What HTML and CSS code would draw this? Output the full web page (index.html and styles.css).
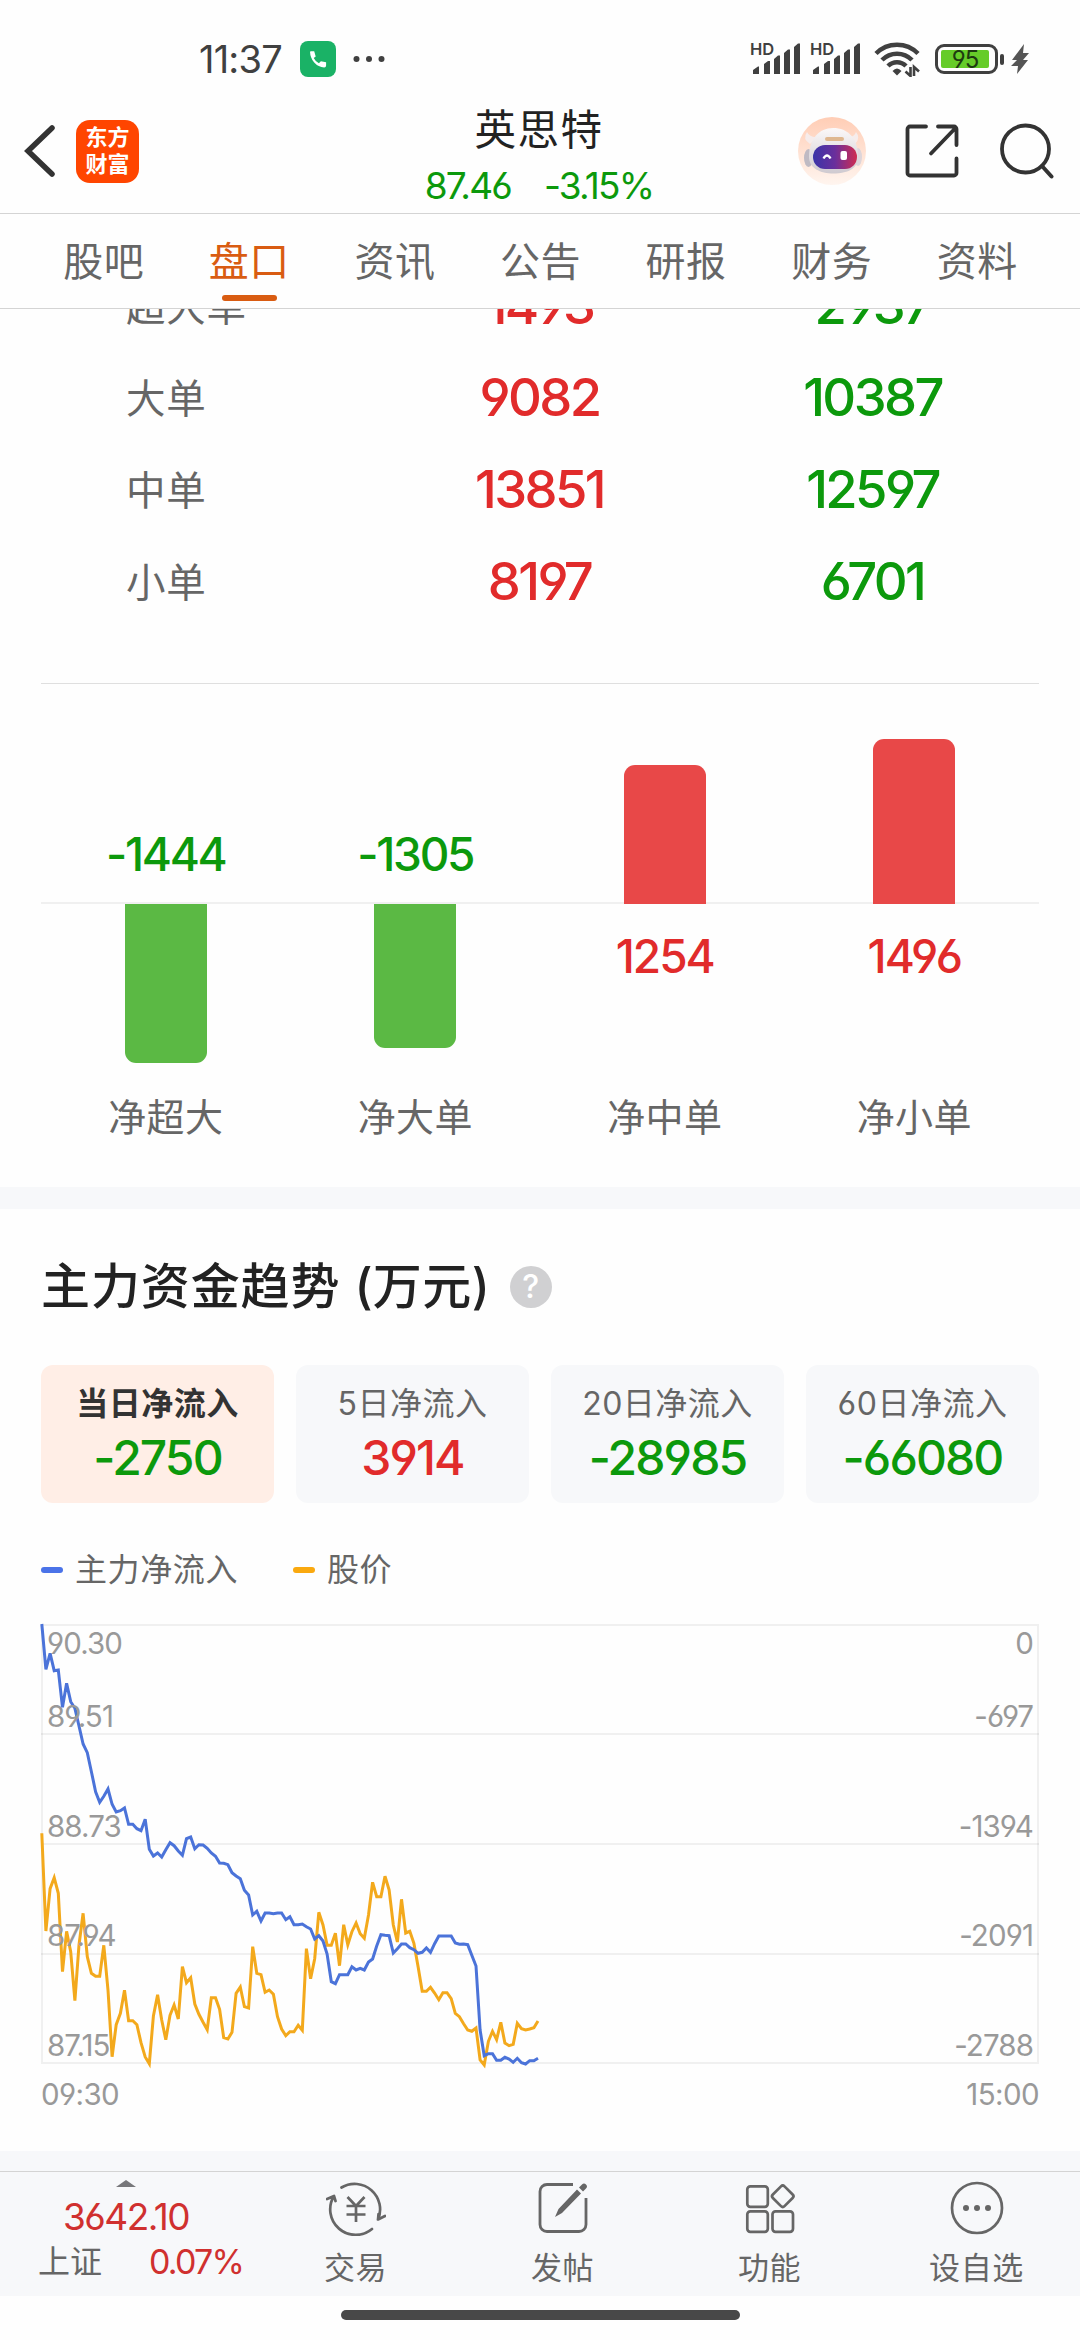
FILE: index.html
```html
<!DOCTYPE html>
<html lang="zh-CN">
<head>
<meta charset="utf-8">
<title>英思特 盘口</title>
<link rel="stylesheet" href="styles.css">
</head>
<body>
<div class="status">
  <span class="clock">11:37</span>
  <svg class="phone" viewBox="0 0 36 36"><rect width="36" height="36" rx="8" fill="#1ab266"/><path d="M10 11.2q0-1 1-1h3.2l1.500 5.200-2 1.600q2 4 5.200 5.200l2-1.900 5.200 1v3.200q0 2-1.900 2-5.800-.3-10-5-4-4.500-4.200-11.300z" fill="#fff"/></svg>
  <svg class="more" viewBox="0 0 32 8"><circle cx="3.500" cy="4" r="3"/><circle cx="16" cy="4" r="3"/><circle cx="28.500" cy="4" r="3"/></svg>
  <div class="status-right">
    <div class="signal"><span>HD</span><svg viewBox="0 0 50 32"><path d="M2 31v-4l5-3.500h1v7.500zM13 31v-10l4-3h2v13zM23 31v-15l4-3.500h2v18.500zM33 31v-21l4-3.500h2v24.500zM43 31v-27l4-3.500h2v30.500z"/></svg></div>
    <div class="signal"><span>HD</span><svg viewBox="0 0 50 32"><path d="M2 31v-4l5-3.500h1v7.500zM13 31v-10l4-3h2v13zM23 31v-15l4-3.500h2v18.500zM33 31v-21l4-3.500h2v24.500zM43 31v-27l4-3.500h2v30.500z"/></svg></div>
    <svg class="wifi" viewBox="0 0 46 36"><g fill="none" stroke="#404040" stroke-width="4.500"><path d="M2 12.500a29.500 29.500 0 0 1 42 0"/><path d="M8 19a21 21 0 0 1 30 0"/><path d="M14 25a12.500 12.500 0 0 1 18 0"/></g><path d="M18.500 30q4.500-5 9 0L23 34.500z" fill="#404040"/><path d="M36.500 26v9l-5-4.500M40 35v-9l5 4.500" fill="none" stroke="#404040" stroke-width="2.600"/></svg>
    <div class="battery"><b>95</b></div><i class="battery-tip"></i>
    <svg class="bolt" viewBox="0 0 18 30"><path d="M13 0L1 16h5L0 22h7L6 30 17 16h-5l6-7h-6z" fill="#555"/></svg>
  </div>
</div>

<header class="header">
  <div class="head-left">
    <svg class="back" viewBox="0 0 32 54"><path d="M28 4L4 27l24 23" fill="none" stroke="#333" stroke-width="5.500" stroke-linecap="round"/></svg>
    <div class="logo"><span>东方</span><span>财富</span></div>
  </div>
  <div class="head-title">
    <h1>英思特</h1>
    <p><span class="px">87.46</span><span class="pct">-3.15%</span></p>
  </div>
  <div class="head-right">
    <svg class="robot" viewBox="0 0 68 68">
      <defs><linearGradient id="bg" x2="0" y2="1"><stop offset="0" stop-color="#ffcdb5"/><stop offset="1" stop-color="#fff5ef"/></linearGradient><linearGradient id="visor"><stop offset="0" stop-color="#3a34a8"/><stop offset=".5" stop-color="#6a2f9c"/><stop offset="1" stop-color="#d02c50"/></linearGradient><linearGradient id="shell" x2="0" y2="1"><stop offset="0" stop-color="#fbf8f8"/><stop offset="1" stop-color="#cfcad0"/></linearGradient></defs>
      <circle cx="34" cy="34" r="34" fill="url(#bg)"/>
      <path d="M9 15q-5 7 3 12l8-7q-8 1-11-5zM58 15q5 6-1 12l-8-7q7 1 9-5z" fill="#f6eceb"/>
      <ellipse cx="10.500" cy="41" rx="4.500" ry="9" fill="#bfbac3"/><ellipse cx="60" cy="40" rx="4" ry="9" fill="#ddd5da"/>
      <path d="M35 11c15 0 25 10 25 29 0 12-11 16.500-24.500 16.500S11 51 11 40c0-18 10-29 24-29z" fill="url(#shell)"/>
      <rect x="15" y="28" width="44" height="24" rx="12" fill="url(#visor)"/>
      <rect x="27" y="20" width="19" height="4" rx="2" fill="#dfb78f"/>
      <path d="M25.500 41.500q3.500-6 7 0" fill="none" stroke="#fff" stroke-width="2.400"/><rect x="42.500" y="34" width="6.500" height="9" rx="2" fill="#fff"/>
    </svg>
    <svg class="share" viewBox="0 0 54 54"><path d="M21 2.500H5a2.500 2.500 0 0 0-2.500 2.500v44A2.500 2.500 0 0 0 5 51.500h44a2.500 2.500 0 0 0 2.500-2.500V34.500M33 2.500h16A2.500 2.500 0 0 1 51.500 5v16M26 29.500L50.500 4" fill="none" stroke="#333" stroke-width="3.800" stroke-linecap="round"/></svg>
    <svg class="search" viewBox="0 0 54 56"><circle cx="25.500" cy="26" r="23.500" fill="none" stroke="#333" stroke-width="3.800"/><path d="M42 43l9.500 10.500" stroke="#333" stroke-width="4" stroke-linecap="round"/></svg>
  </div>
</header>

<nav class="tabs">
  <a>股吧</a><a class="on">盘口</a><a>资讯</a><a>公告</a><a>研报</a><a>财务</a><a>资料</a>
</nav>

<main>
  <section class="orders">
    <div class="order"><span>超大单</span><b class="red">1493</b><b class="green">2937</b></div>
    <div class="order"><span>大单</span><b class="red">9082</b><b class="green">10387</b></div>
    <div class="order"><span>中单</span><b class="red">13851</b><b class="green">12597</b></div>
    <div class="order"><span>小单</span><b class="red">8197</b><b class="green">6701</b></div>
  </section>

  <section class="net">
    <div class="net-row above">
      <div class="green">-1444</div><div class="green">-1305</div>
      <div><i class="bar up" style="height:139px"></i></div><div><i class="bar up" style="height:165px"></i></div>
    </div>
    <div class="net-row below">
      <div><i class="bar down" style="height:159px"></i></div><div><i class="bar down" style="height:144px"></i></div>
      <div class="red val">1254</div><div class="red val">1496</div>
    </div>
    <div class="net-row names"><div>净超大</div><div>净大单</div><div>净中单</div><div>净小单</div></div>
  </section>

  <section class="trend">
    <h2>主力资金趋势<span class="unit">(万元)</span><i class="help">?</i></h2>
    <div class="cards">
      <div class="card on"><span>当日净流入</span><b class="green">-2750</b></div>
      <div class="card"><span>5日净流入</span><b class="red">3914</b></div>
      <div class="card"><span>20日净流入</span><b class="green">-28985</b></div>
      <div class="card"><span>60日净流入</span><b class="green">-66080</b></div>
    </div>
    <div class="legend"><span class="key blue">主力净流入</span><span class="key amber">股价</span></div>
    <div class="chart">
      <svg class="plot" viewBox="0 0 998 440">
        <g fill="none" stroke="#000" stroke-opacity=".055" stroke-width="2"><rect x="1" y="1" width="996" height="438"/><path d="M0 110h998M0 220h998M0 330h998"/></g>
        <polyline id="price" stroke="#f3a91c"/>
        <polyline id="flow" stroke="#4b73d9"/>
      </svg>
      <div class="scale">
        <div><span>90.30</span><span>0</span></div>
        <div><span>89.51</span><span>-697</span></div>
        <div><span>88.73</span><span>-1394</span></div>
        <div><span>87.94</span><span>-2091</span></div>
        <div><span>87.15</span><span>-2788</span></div>
      </div>
    </div>
    <div class="times"><span>09:30</span><span>15:00</span></div>
  </section>
</main>

<footer class="dock">
  <div class="index">
    <i class="tri"></i>
    <div class="idx">3642.10</div>
    <div class="idx-row"><span>上证</span><b>0.07%</b></div>
  </div>
  <div class="item"><svg viewBox="0 0 60 56"><g fill="none" stroke="#666" stroke-width="2.700" stroke-linecap="round" stroke-linejoin="round"><path d="M15.500 7.500A25.500 25.500 0 0 1 52 39.500L59 36M52 39.500L52.500 34M46 49A25.500 25.500 0 0 1 8 16L1 19M8 16L9.500 21"/><path d="M21.500 17l8.500 9 8.500-9M20.500 26h19M20.500 34.500h19M30 26v16" stroke-linecap="butt"/></g></svg><span>交易</span></div>
  <div class="item"><svg viewBox="0 0 60 56"><path d="M40 4.500H14a7 7 0 0 0-7 7v33a7 7 0 0 0 7 7h32a7 7 0 0 0 7-7V18" fill="none" stroke="#666" stroke-width="2.800"/><path d="M44 9.500l4 4L29 33l-7 4 3.500-8zM46 7.500l3-3a2.800 2.800 0 0 1 4 4l-3 3z" fill="#666"/></svg><span>发帖</span></div>
  <div class="item"><svg viewBox="0 0 60 56"><g fill="none" stroke="#666" stroke-width="2.700"><rect x="7.300" y="6.300" width="20.500" height="20.500" rx="3"/><rect x="7.300" y="31.300" width="20.500" height="20.500" rx="3"/><rect x="32.500" y="31.300" width="20.500" height="20.500" rx="3"/><rect x="34.500" y="8" width="16.500" height="16.500" rx="2.500" transform="rotate(45 42.750 16.250)"/></g></svg><span>功能</span></div>
  <div class="item"><svg viewBox="0 0 60 56"><circle cx="30" cy="28" r="25" fill="none" stroke="#666" stroke-width="2.700"/><g fill="#666"><circle cx="19" cy="28" r="3"/><circle cx="30" cy="28" r="3"/><circle cx="41" cy="28" r="3"/></g></svg><span>设自选</span></div>
</footer>
<div class="home"><i></i></div>
<script src="chart.js"></script>
</body>
</html>
```
FILE: styles.css
```css
* { box-sizing: border-box; margin: 0; padding: 0; }
body {
  width: 1080px; height: 2340px; overflow: hidden;
  display: flex; flex-direction: column;
  background: #fefefe; color: #222;
  font-family: Inter, "Noto Sans CJK SC", sans-serif;
  font-feature-settings: "cv03", "cv04";
}
i { font-style: normal; display: block; }
svg { display: block; flex: none; }
.red { color: #e12b2b; }
.green { color: #0c990c; }

.status { height: 88px; padding: 30px 51px 0 199px; display: flex; align-items: center; color: #404040; }
.clock { font-size: 38px; line-height: 58px; width: 101px; letter-spacing: -.8px; }
.phone { width: 36px; height: 36px; }
.more { width: 32px; height: 8px; margin-left: 17px; fill: #404040; }
.status-right { margin-left: auto; display: flex; align-items: center; }
.signal { position: relative; width: 60px; height: 32px; }
.signal svg { width: 50px; height: 32px; fill: #404040; }
.signal span { position: absolute; left: -1px; top: -2px; font-size: 16.500px; line-height: 16px; font-weight: 600; }
.wifi { width: 46px; height: 36px; margin: 0 15px 0 3px; }
.battery { width: 63px; height: 30px; border: 3px solid #404040; border-radius: 9px; padding: 3px; }
.battery b { display: block; width: 48px; height: 18px; border-radius: 2px; background: #66cc29; font-size: 24px; line-height: 19px; font-weight: 400; text-align: center; color: #1d3a10; letter-spacing: -1px; }
.battery-tip { width: 4px; height: 11px; border-radius: 2px; background: #404040; margin: 0 7px 0 2px; }
.bolt { width: 18px; height: 30px; }

.header { height: 126px; border-bottom: 1px solid #d4d4d4; display: grid; grid-template-columns: 1fr auto 1fr; align-items: center; padding: 0 26px 0 24px; }
.head-left, .head-right { display: flex; align-items: center; }
.back { width: 32px; height: 54px; margin-right: 20px; }
.logo { width: 63px; height: 63px; border-radius: 14px; background: #ff4500; color: #fff; display: flex; flex-direction: column; align-items: center; justify-content: center; font-size: 22px; font-weight: 700; line-height: 27px; }
.head-title { text-align: center; padding-top: 14px; align-self: start; }
.head-title h1 { font-size: 41.500px; line-height: 56px; font-weight: 400; letter-spacing: 1.500px; }
.head-title p { font-size: 37px; line-height: 56px; color: #0c990c; display: flex; justify-content: center; gap: 33px; letter-spacing: -1.800px; }
.head-right { justify-content: flex-end; }
.robot { width: 68px; height: 68px; margin-right: 39px; }
.share { width: 54px; height: 54px; margin-right: 41px; }
.search { width: 54px; height: 56px; }

.tabs { height: 95px; border-bottom: 1px solid #d4d4d4; display: flex; padding: 20px 30px 0 31px; }
.tabs a { flex: 1; font-size: 40px; line-height: 56px; text-align: center; color: #666; letter-spacing: .5px; }
.tabs .on { color: #d95c12; }
.tabs .on::after { content: ""; display: block; width: 55px; height: 6px; border-radius: 3px; background: #d95c12; margin: 5px auto 0; }

main { height: 1862px; overflow: hidden; background: #f7f8fa; }
.orders { margin-top: -48px; background: #fefefe; padding-bottom: 54px; }
.order { height: 92px; display: grid; grid-template-columns: 247px 333px 333px; align-items: center; padding-left: 126px; }
.order span { font-size: 39.500px; color: #666; letter-spacing: .8px; line-height: 56px; }
.order b { font-size: 52.500px; font-weight: 500; line-height: 60px; text-align: center; padding-bottom: 5px; letter-spacing: -2.600px; }

.net { background: #fefefe; padding: 0 41px 42px; }
.net::before { content: ""; display: block; height: 1px; background: #dfdfdf; }
.net-row { display: grid; grid-template-columns: repeat(4, 1fr); text-align: center; font-size: 46px; font-weight: 500; line-height: 60px; letter-spacing: -2px; }
.above { height: 220px; align-items: end; background: linear-gradient(#f0f0f0, #f0f0f0) bottom / 100% 2px no-repeat; }
.above .green { padding-bottom: 20px; letter-spacing: -2.300px; }
.below { height: 185px; }
.val { padding-top: 22px; }
.names { font-size: 38px; line-height: 56px; font-weight: 400; color: #666; letter-spacing: .3px; }
.bar { width: 82px; margin: 0 auto; }
.up { background: #e84848; border-radius: 11px 11px 0 0; }
.down { background: #5bb944; border-radius: 0 0 11px 11px; }

.trend { margin-top: 22px; background: #fefefe; padding: 48px 41px 37px; }
.trend h2 { font-size: 49px; line-height: 60px; font-weight: 500; display: flex; align-items: center; letter-spacing: .9px; }
.unit { margin-left: 14px; letter-spacing: .4px; }
.help { width: 42px; height: 42px; border-radius: 50%; background: #d0d0d2; color: #fff; font-size: 32px; line-height: 42px; font-weight: 500; text-align: center; margin-left: 20px; }
.cards { display: grid; grid-template-columns: repeat(4, 233px); gap: 22px; margin-top: 48px; }
.card { height: 138px; border-radius: 12px; background: #f7f8fa; padding-top: 17px; text-align: center; color: #666; }
.card.on { background: #ffeee6; color: #333; }
.card span { display: block; font-size: 32px; line-height: 44px; letter-spacing: .5px; }
.card.on span { font-weight: 600; }
.card b { display: block; font-size: 48px; font-weight: 500; line-height: 60px; margin-top: 2px; letter-spacing: -1.900px; }
.legend { display: flex; margin-top: 42px; font-size: 32px; line-height: 50px; color: #666; letter-spacing: .6px; }
.key { display: flex; align-items: center; gap: 12px; margin-right: 55px; }
.key::before { content: ""; width: 22px; height: 6px; border-radius: 3px; background: #4b73e8; }
.amber::before { background: #faa90f; }
.chart { position: relative; height: 440px; margin-top: 29px; }
.plot { width: 998px; height: 440px; overflow: visible; }
.plot polyline { fill: none; stroke-width: 3; }
.scale { position: absolute; inset: 0 6px 0 6px; display: flex; flex-direction: column; justify-content: space-between; padding-bottom: 1px; letter-spacing: -.9px; }
.scale div { height: 110px; display: flex; align-items: flex-end; justify-content: space-between; line-height: 36px; }
.scale div:first-child { height: 37px; }
.scale div:nth-child(2) { height: 73px; }
.scale, .times { font-size: 29.500px; color: #999; }
.times { display: flex; justify-content: space-between; line-height: 40px; margin-top: 10px; letter-spacing: -.6px; }

.dock { height: 125px; background: #f7f8fa; border-top: 1px solid #d4d4d4; display: flex; color: #666; }
.index { width: 252px; display: flex; flex-direction: column; align-items: center; padding-top: 8px; }
.tri { width: 20px; height: 7px; background: #77777a; clip-path: polygon(50% 0, 100% 100%, 0 100%); }
.idx { font-size: 37px; line-height: 44px; margin-top: 8px; color: #d0302f; letter-spacing: -1.500px; }
.idx-row { width: 100%; display: flex; justify-content: space-between; padding: 0 9px 0 38px; line-height: 44px; font-size: 32px; margin-top: 1px; }
.idx-row b { font-size: 34px; font-weight: 400; color: #d0302f; letter-spacing: -1.800px; }
.item { width: 207px; display: flex; flex-direction: column; align-items: center; padding-top: 8px; font-size: 31px; line-height: 44px; letter-spacing: .6px; }
.item svg { width: 60px; height: 56px; margin-bottom: 10px; }
.home { height: 44px; padding-top: 14px; }
.home i { width: 399px; height: 10px; border-radius: 5px; background: #484848; margin: 0 auto; }
```
FILE: chart.js
```js
// One sample per minute from 09:30; values are thirds of a pixel below the plot's top edge.
const flow = [0,136,88,140,138,250,178,233,253,306,360,386,443,503,535,517,495,541,564,560,552,601,601,614,620,586,676,696,687,699,677,656,665,681,694,644,639,674,662,663,673,687,697,717,718,722,746,756,764,799,813,873,862,891,867,867,869,867,867,887,878,902,902,900,908,915,945,935,951,990,1073,1079,1052,1052,1052,1028,1038,1033,1038,1014,1005,966,932,934,935,987,974,960,960,971,977,988,985,972,985,959,936,936,936,936,957,961,960,962,994,1026,1218,1295,1289,1289,1309,1309,1300,1305,1315,1303,1316,1320,1310,1310,1303];
const price = [628,921,794,761,808,1043,922,983,1130,963,868,998,1048,1057,1057,964,1098,1298,1202,1168,1099,1190,1190,1202,1256,1299,1319,1176,1112,1188,1247,1174,1143,1185,1028,1076,1061,1140,1171,1195,1217,1121,1121,1156,1241,1245,1225,1108,1089,1148,1152,968,1048,1052,1105,1098,1111,1178,1215,1235,1223,1223,1204,1219,974,1064,1004,865,903,964,964,928,1025,902,962,923,897,929,943,873,775,818,818,757,797,903,954,826,927,922,958,1028,1102,1102,1090,1107,1127,1106,1106,1124,1168,1178,1199,1218,1222,1212,1308,1323,1252,1222,1247,1195,1257,1265,1261,1198,1214,1218,1215,1211,1191];
const draw = (id, values) => document.getElementById(id).setAttribute(
  'points', values.map((v, i) => `${(0.8 + i * 4.135).toFixed(1)},${(v / 3).toFixed(1)}`).join(' '));
draw('price', price);
draw('flow', flow);
```
